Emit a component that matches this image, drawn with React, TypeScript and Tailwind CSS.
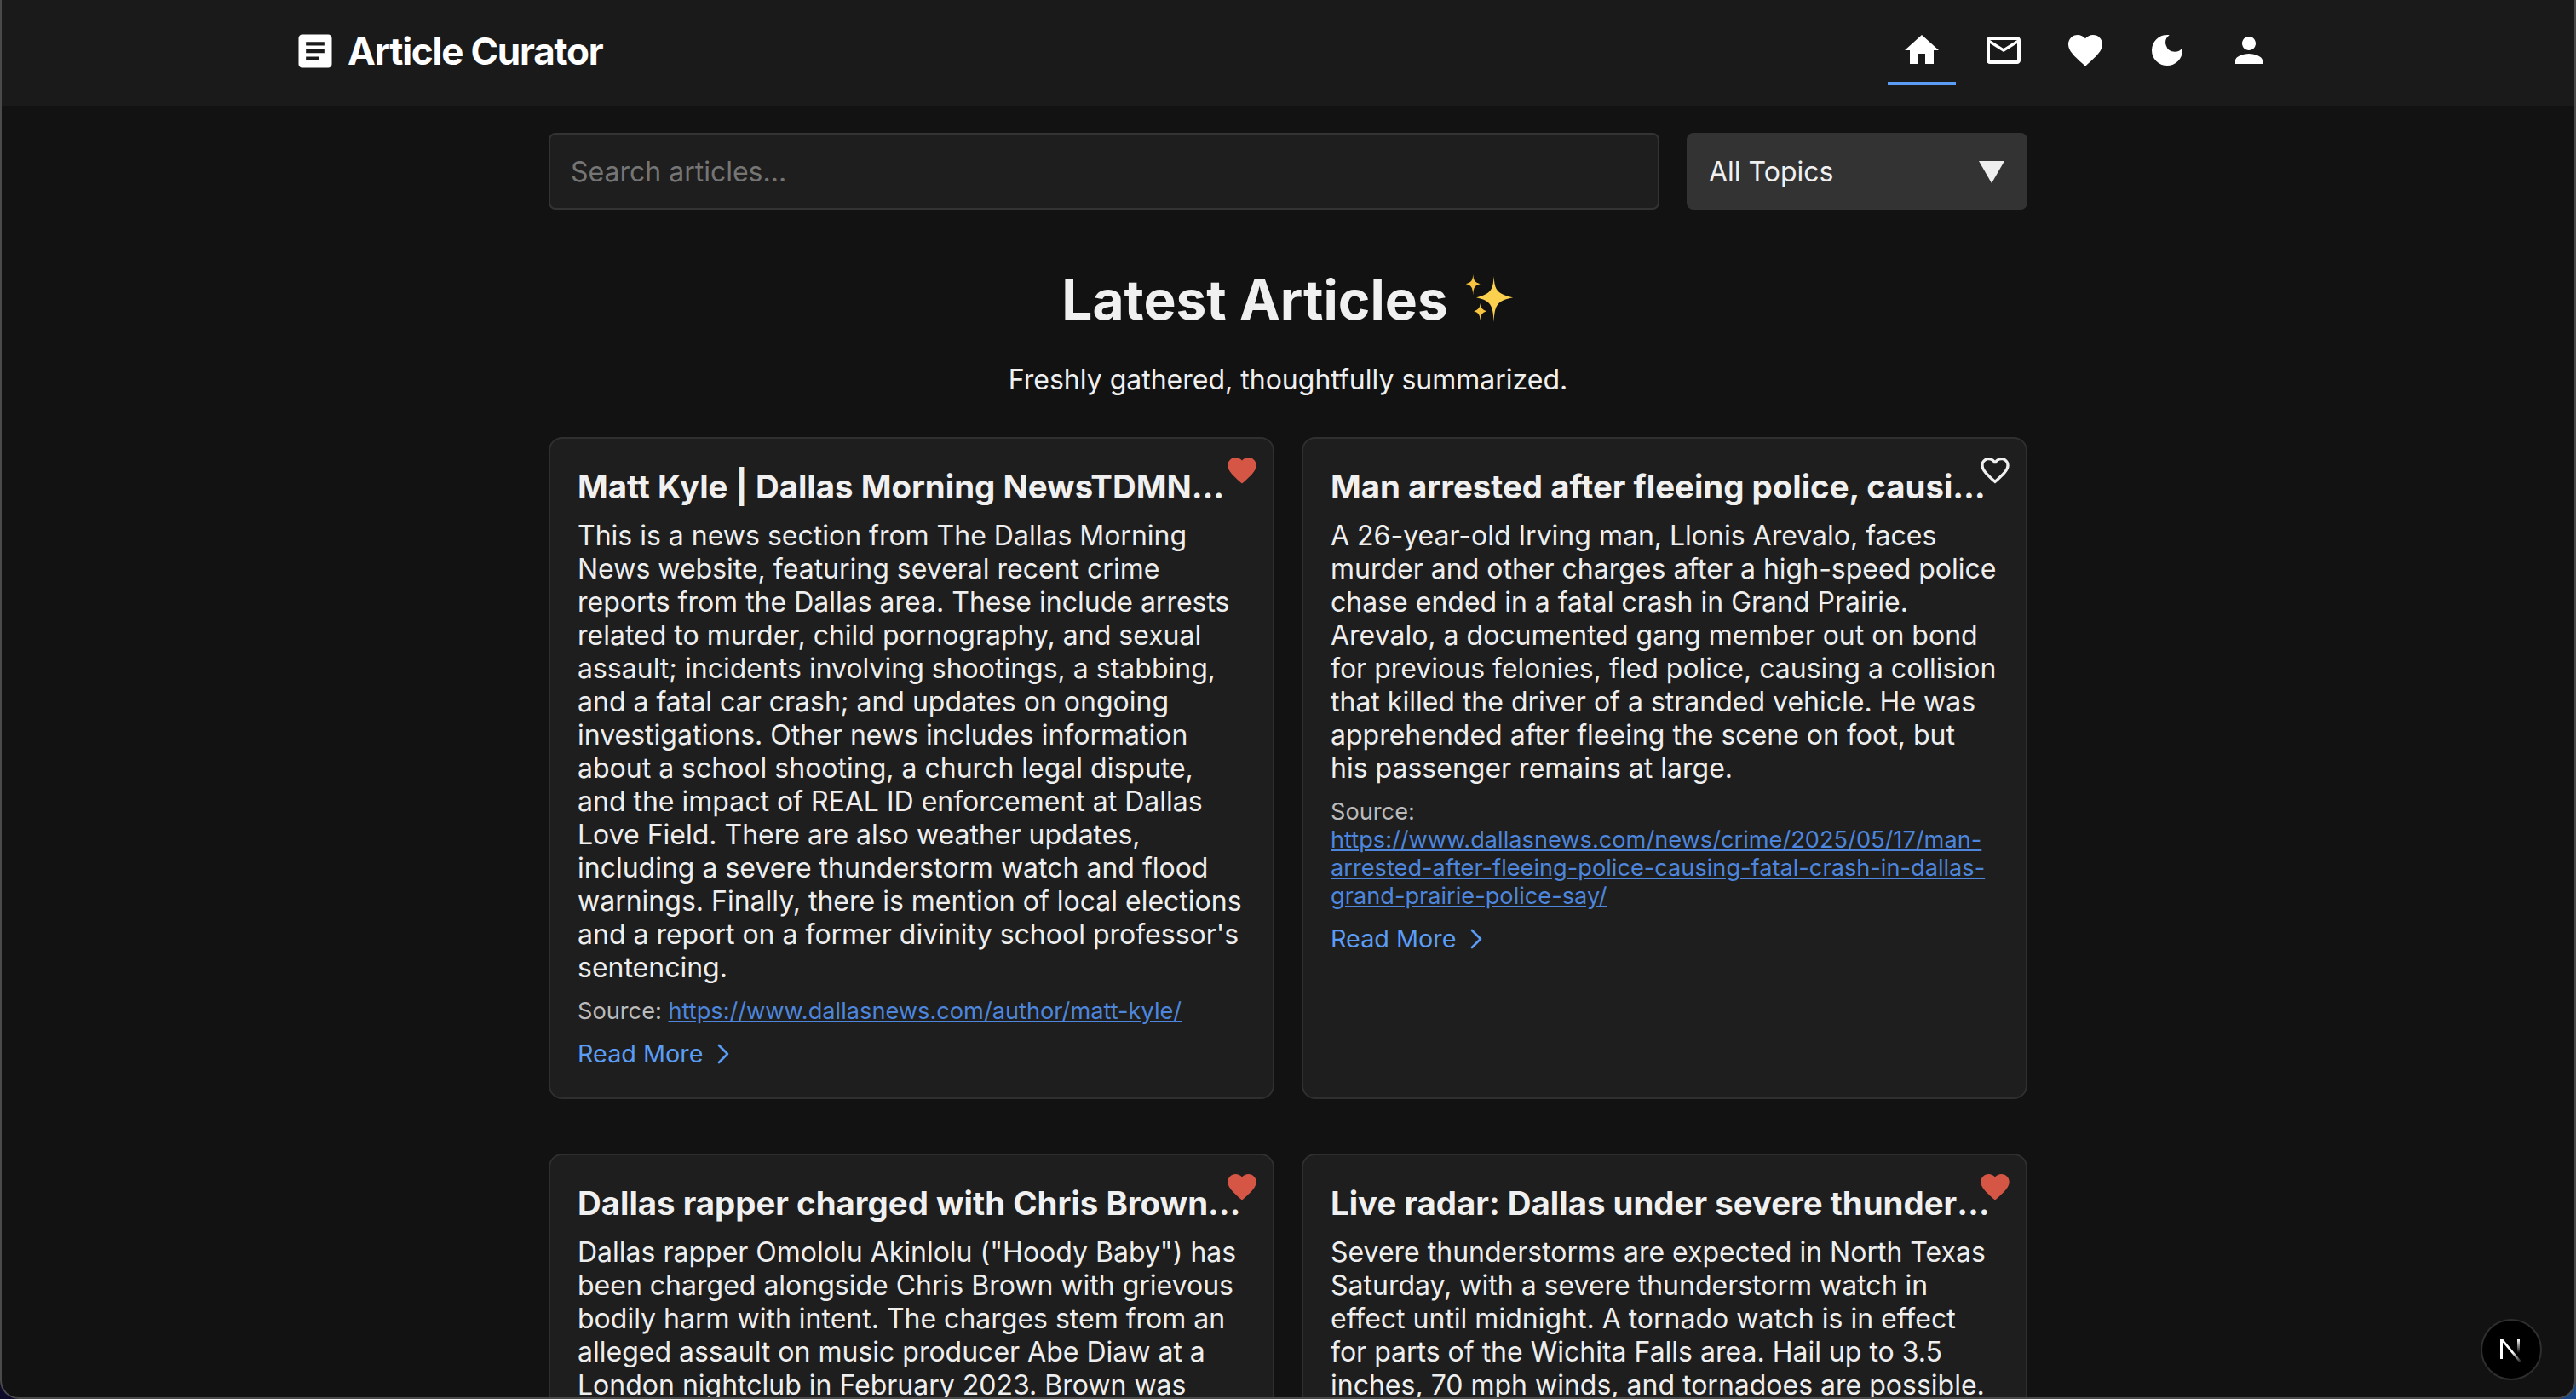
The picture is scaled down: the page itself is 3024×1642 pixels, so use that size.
import { MdArticle, MdDarkMode, MdFavorite, MdFavoriteBorder, MdHome, MdMailOutline, MdPerson } from "react-icons/md";
import { ChevronRight } from "lucide-react";

interface Article {
  id: string;
  title: string;
  summary: string;
  url?: string;
  saved: boolean;
}

const articles: Article[] = [
  {
    id: "a1",
    title: "Matt Kyle | Dallas Morning NewsTDMNMatt Kyle Dallas Morning News",
    summary:
      "This is a news section from The Dallas Morning News website, featuring several recent crime reports from the Dallas area. These include arrests related to murder, child pornography, and sexual assault; incidents involving shootings, a stabbing, and a fatal car crash; and updates on ongoing investigations. Other news includes information about a school shooting, a church legal dispute, and the impact of REAL ID enforcement at Dallas Love Field. There are also weather updates, including a severe thunderstorm watch and flood warnings. Finally, there is mention of local elections and a report on a former divinity school professor's sentencing.",
    url: "https://www.dallasnews.com/author/matt-kyle/",
    saved: true,
  },
  {
    id: "a2",
    title: "Man arrested after fleeing police, causing fatal crash in Dallas",
    summary:
      "A 26-year-old Irving man, Llonis Arevalo, faces murder and other charges after a high-speed police chase ended in a fatal crash in Grand Prairie. Arevalo, a documented gang member out on bond for previous felonies, fled police, causing a collision that killed the driver of a stranded vehicle. He was apprehended after fleeing the scene on foot, but his passenger remains at large.",
    url: "https://www.dallasnews.com/news/crime/2025/05/17/man-arrested-after-fleeing-police-causing-fatal-crash-in-dallas-grand-prairie-police-say/",
    saved: false,
  },
  {
    id: "a3",
    title: "Dallas rapper charged with Chris Brown in London assault case",
    summary:
      'Dallas rapper Omololu Akinlolu ("Hoody Baby") has been charged alongside Chris Brown with grievous bodily harm with intent. The charges stem from an alleged assault on music producer Abe Diaw at a London nightclub in February 2023. Brown was',
    saved: true,
  },
  {
    id: "a4",
    title: "Live radar: Dallas under severe thunderstorm watch until midnight",
    summary:
      "Severe thunderstorms are expected in North Texas Saturday, with a severe thunderstorm watch in effect until midnight. A tornado watch is in effect for parts of the Wichita Falls area. Hail up to 3.5 inches, 70 mph winds, and tornadoes are possible.",
    saved: true,
  },
];

function Sparkles() {
  return (
    <svg viewBox="0 0 64 64" className="w-[60px] h-[60px]" aria-hidden="true">
      <path d="M38 2 C39 20 42 24 62 29 C42 33 39 38 38 60 C37 38 34 33 16 29 C34 24 37 20 38 2 Z" fill="#fbd04f" />
      <path d="M12 0 C12.6 8 14 10 21 12 C14 14 12.6 16 12 26 C11.4 16 10 14 3 12 C10 10 11.4 8 12 0 Z" fill="#f8c440" />
      <path d="M21 36 C21.6 42 23 44 29 46 C23 48 21.6 50 21 58 C20.4 50 19 48 13 46 C19 44 20.4 42 21 36 Z" fill="#f8c440" />
    </svg>
  );
}

function NextBadge() {
  return (
    <div className="absolute right-[38px] bottom-[20px] w-[72px] h-[72px] rounded-full bg-black border-2 border-[#2e2e2e] flex items-center justify-center">
      <svg viewBox="0 0 36 36" className="w-[36px] h-[36px]" aria-hidden="true">
        <defs>
          <linearGradient id="n-diag" x1="0" y1="0" x2="1" y2="1">
            <stop offset="0.55" stopColor="#fff" />
            <stop offset="1" stopColor="#fff" stopOpacity="0" />
          </linearGradient>
          <linearGradient id="n-bar" x1="0" y1="0" x2="0" y2="1">
            <stop offset="0" stopColor="#fff" />
            <stop offset="1" stopColor="#fff" stopOpacity="0" />
          </linearGradient>
        </defs>
        <rect x="5" y="6" width="3" height="23" fill="#fff" />
        <path d="M5 6 H8.5 L31 33 H27.5 Z" fill="url(#n-diag)" />
        <rect x="25" y="6" width="3" height="16" fill="url(#n-bar)" />
      </svg>
    </div>
  );
}

function ArticleCard({ article }: { article: Article }) {
  return (
    <div className="relative bg-[#1e1e1e] border-2 border-[#2f2f2f] rounded-2xl pt-[30px] px-8 pb-[31px]">
      <button className="absolute top-[17px] right-[16px]">
        {article.saved ? (
          <MdFavorite className="w-10 h-10 text-[#d65645]" />
        ) : (
          <MdFavoriteBorder className="w-10 h-10 text-[#f0f0f0]" />
        )}
      </button>
      <h3 className="text-[38.4px] leading-[52px] font-bold text-[#f0f0f0] truncate mb-3">{article.title}</h3>
      <p className="text-[32px] leading-[39px] text-[#eeeeee]">{article.summary}</p>
      {article.url && (
        <p className="mt-[15px] text-[27.2px] leading-[33px] text-[#bbbbbb]">
          Source:{" "}
          <a className="text-[#4d86dc] underline" href="#">
            {article.url}
          </a>
        </p>
      )}
      {article.url && (
        <a className="mt-[14px] flex items-center gap-[3px] text-[28.8px] leading-[36px] text-[#5b9df5]" href="#">
          Read More
          <ChevronRight className="w-10 h-10" strokeWidth={1.6} />
        </a>
      )}
    </div>
  );
}

export default function App() {
  return (
    <div className="relative h-[1642px] overflow-hidden bg-[linear-gradient(to_right,#0e0a2a,#1d4a8a)] font-['Inter',sans-serif]">
      <div className="relative h-full overflow-hidden rounded-b-[22px] border-x-2 border-b-2 border-[#4a4a4a] bg-[#121212]">
        {/* Header */}
        <header className="h-[124px] pb-[4px] bg-[#1a1a1a] flex justify-center">
          <div className="w-[2336px] flex items-center justify-between">
            <div className="flex items-center gap-[12px]">
              <MdArticle className="w-[52px] h-[52px] text-white" />
              <span className="text-[44px] tracking-[-1.2px] font-bold text-white">Article Curator</span>
            </div>
            <nav className="flex items-center gap-4">
              <a className="px-4 pt-[15px] pb-[13px] border-b-4 border-[#5b9df5] text-white">
                <MdHome className="w-12 h-12" />
              </a>
              <a className="px-4 pt-[15px] pb-[13px] border-b-4 border-transparent text-white">
                <MdMailOutline className="w-12 h-12" />
              </a>
              <a className="px-4 pt-[15px] pb-[13px] border-b-4 border-transparent text-white">
                <MdFavorite className="w-12 h-12" />
              </a>
              <a className="px-4 pt-[15px] pb-[13px] border-b-4 border-transparent text-white">
                <MdDarkMode className="w-12 h-12" />
              </a>
              <a className="px-4 pt-[15px] pb-[13px] border-b-4 border-transparent text-white">
                <MdPerson className="w-12 h-12" />
              </a>
            </nav>
          </div>
        </header>

        <main className="w-[1736px] mx-auto pt-8">
          {/* Filters */}
          <div className="flex gap-8">
            <div className="flex-1 h-[90px] flex items-center px-[24px] pt-[1px] bg-[#1e1e1e] border-2 border-[#333333] rounded-lg text-[32px] text-[#757575]">
              Search articles...
            </div>
            <div className="w-[400px] h-[90px] flex items-center justify-between pl-[26px] pr-[27px] pt-[1px] bg-[#333333] rounded-lg text-[32px] text-[#f0f0f0]">
              All Topics
              <svg viewBox="0 0 30 26" className="w-[30px] h-[26px]" aria-hidden="true">
                <path d="M0 0 H30 L15 26 Z" fill="#eeeeee" />
              </svg>
            </div>
          </div>

          {/* Heading */}
          <div className="mt-[64px] text-center">
            <h1 className="flex items-center justify-center gap-[18px] text-[64px] leading-[84px] font-bold text-[#f0f0f0]">
              Latest Articles
              <Sparkles />
            </h1>
            <p className="mt-[32px] text-[32px] leading-[39px] text-[#f0f0f0]">Freshly gathered, thoughtfully summarized.</p>
          </div>

          {/* Cards */}
          <div className="mt-[48px] grid grid-cols-2 gap-x-8 gap-y-[64px]">
            {articles.map((article) => (
              <ArticleCard key={article.id} article={article} />
            ))}
          </div>
        </main>

        <NextBadge />
      </div>
    </div>
  );
}
